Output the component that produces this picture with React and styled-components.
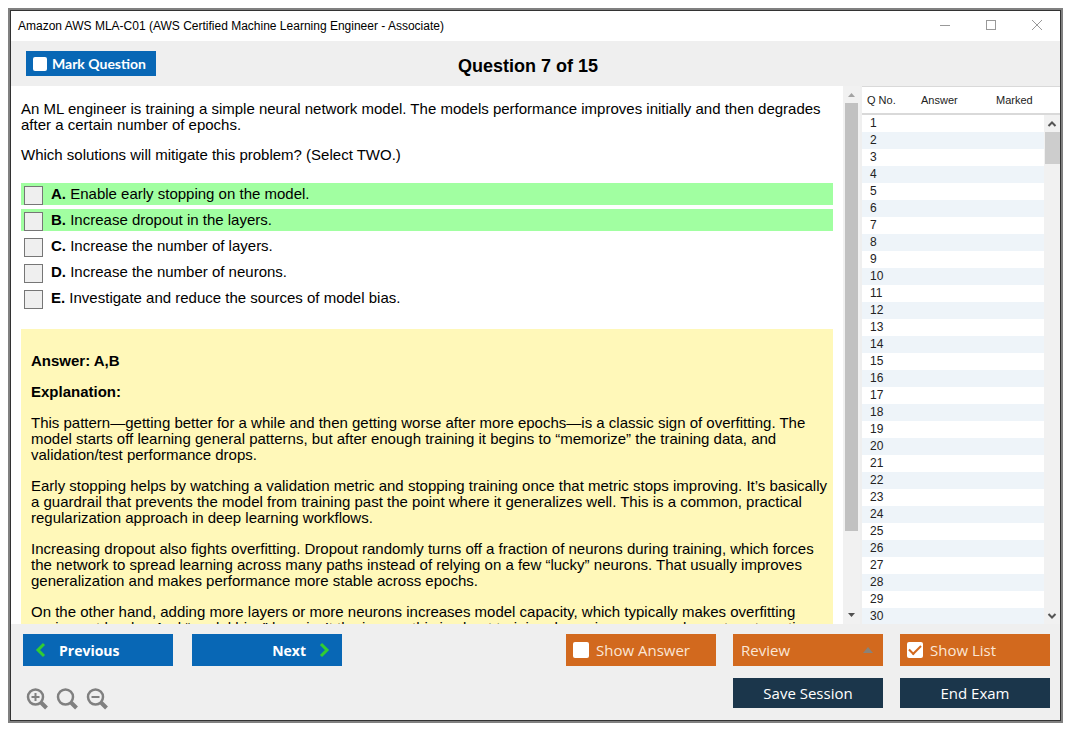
import React from "react";
import styled, { createGlobalStyle, css } from "styled-components";

const Global = createGlobalStyle`
  * { box-sizing: border-box; }
  body { margin: 0; background: #fff; color: #000; font-family: "Liberation Sans", Arial, sans-serif; }
  p, h1, h2 { margin: 0; }
  button, input, select { font: inherit; margin: 0; }
`;

const Page = styled.div`
  height: 100vh;
  min-height: 400px;
  padding: 8px 12px 12px 8px;
`;

const Window = styled.main`
  height: 100%;
  border: 2px solid #808080;
  outline: 1px solid #333;
  outline-offset: -3px;
  padding: 1px;
  display: flex;
  flex-direction: column;
  background: #efefef;
`;

const TitleBar = styled.header`
  display: flex;
  align-items: center;
  justify-content: space-between;
  height: 30px;
  flex: none;
  padding: 0 17px 0 7px;
  background: #fff;
  font-size: 12px;
`;

const WindowControls = styled.div`
  display: flex;
  gap: 34px;
  padding-bottom: 2px;
`;

const ControlButton = styled.button`
  width: 12px;
  height: 12px;
  padding: 0;
  border: 0;
  background: none;
  svg { display: block; }
`;

const Header = styled.div`
  display: grid;
  grid-template-columns: 1fr auto 1fr;
  align-items: center;
  height: 45px;
  flex: none;
  padding: 0 30px 0 15px;
`;

const Heading = styled.h1`
  font-size: 18px;
  line-height: 20px;
  padding-top: 4px;
`;

const MarkLabel = styled.label`
  justify-self: start;
  display: flex;
  align-items: center;
  gap: 5px;
  height: 25px;
  padding: 0 10px 0 7px;
  background: #0867b5;
  color: #fff;
  font: bold 14px Lato, sans-serif;
`;

const WhiteBox = styled.input.attrs({ type: "checkbox" })`
  appearance: none;
  flex: none;
  width: ${(p) => p.$size}px;
  height: ${(p) => p.$size}px;
  border-radius: 2px;
  background: #fff;
  display: grid;
  place-items: center;
  &:checked::after {
    content: "";
    width: 10px;
    height: 5px;
    border: solid #d2691e;
    border-width: 0 0 2px 2px;
    transform: rotate(-45deg);
    margin-bottom: 3px;
  }
`;

const Body = styled.div`
  display: flex;
  flex: 1;
  min-height: 0;
`;

const Content = styled.section`
  flex: 1;
  min-width: 0;
  overflow: hidden;
  padding: 15px 10px 0;
  background: #fff;
  font-size: 15px;
  line-height: 16px;
`;

const Stack = styled.div`
  display: flex;
  flex-direction: column;
  gap: ${(p) => p.$gap}px;
`;

const Options = styled.ul`
  list-style: none;
  margin: 20px 0;
  padding: 0;
  display: flex;
  flex-direction: column;
  gap: 4px;
`;

const Option = styled.li`
  height: 22px;
  background: ${(p) => (p.$correct ? "#a1ffa1" : "transparent")};
  label { display: flex; gap: 8px; padding: 3px; }
`;

const OptionBox = styled.input.attrs({ type: "checkbox" })`
  appearance: none;
  flex: none;
  width: 19px;
  height: 19px;
  border: 1px solid #767676;
  background: #efefef;
`;

const Explanation = styled(Stack)`
  padding: 24px 4px 24px 10px;
  background: #fff8b9;
  h2 { font-size: 15px; line-height: 16px; }
`;

const Scroll = styled.div`
  display: flex;
  flex-direction: column;
  align-items: center;
  width: 17px;
  flex: none;
  background: #f1f1f1;
  svg { display: block; flex: none; }
`;

const Track = styled.div`
  flex: 1;
  width: 13px;
`;

const Thumb = styled.div`
  height: ${(p) => p.$size};
  background: ${(p) => p.$color};
`;

const ListPane = styled.aside`
  position: relative;
  width: 198px;
  flex: none;
  margin-left: 2px;
  overflow: hidden;
  background: #fff;
  border-top: 1px solid #d9d9d9;
`;

const ListScroll = styled(Scroll)`
  position: absolute;
  top: 28px;
  right: 0;
  bottom: 0;
  width: 16px;
  ${Track} { width: 15px; }
`;

const Table = styled.table`
  width: 100%;
  border-collapse: separate;
  border-spacing: 0;
  table-layout: fixed;
  color: #222;
  th { height: 28px; padding: 0 5px; font-size: 11px; font-weight: normal; text-align: left; border-bottom: 2px solid #d9d9d9; }
  th:nth-child(1) { width: 54px; }
  th:nth-child(2) { width: 75px; }
  td { height: 17px; padding: 0 8px; font-size: 12px; line-height: 17px; }
  tbody tr:nth-child(even) { background: #eef4f9; }
`;

const Footer = styled.footer`
  display: flex;
  justify-content: space-between;
  flex: none;
  padding: 10px 10px 10px 12px;
  font-family: "Open Sans", sans-serif;
  font-size: 15px;
`;

const NavGroup = styled.div`
  display: flex;
  flex-direction: column;
  gap: 20px;
`;

const NavButtons = styled.div`
  display: flex;
  gap: 19px;
`;

const tile = css`
  display: flex;
  align-items: center;
  width: 150px;
  height: ${(p) => (p.$dark ? 30 : 32)}px;
  border: 0;
  color: #fff;
`;

const NavButton = styled.button`
  ${tile}
  gap: 12px;
  padding: 0 12px;
  justify-content: ${(p) => (p.$end ? "flex-end" : "flex-start")};
  background: #0867b5;
  font-size: 14px;
  font-weight: bold;
`;

const Tools = styled.div`
  display: flex;
  gap: 6px;
  padding-left: 3px;
`;

const ToolButton = styled.button`
  width: 24px;
  height: 24px;
  padding: 0;
  border: 0;
  background: none;
  svg { display: block; }
`;

const Actions = styled.div`
  display: grid;
  grid-template-columns: repeat(3, auto);
  gap: 12px 17px;
  align-content: start;
`;

const ToggleTile = styled.label`
  ${tile}
  gap: 7px;
  padding: 0 7px;
  background: #d2691e;
  color: #fbe6d6;
`;

const ReviewWrap = styled.div`
  position: relative;
  svg { position: absolute; right: 9px; top: 13px; pointer-events: none; }
`;

const ReviewSelect = styled.select`
  ${tile}
  appearance: none;
  padding: 0 8px;
  background: #d2691e;
  color: #fbe6d6;
`;

const DarkButton = styled.button`
  ${tile}
  justify-content: center;
  background: #1b364b;
  grid-column: ${(p) => p.$column};
`;

const Arrow = ({ up }) => (
  <svg width="17" height="17" aria-hidden="true">
    <path d={up ? "M5 11l3.5-4 3.5 4z" : "M5 6l3.5 4L12 6z"} fill={up ? "#a3a3a3" : "#505050"} />
  </svg>
);

const Chevron = ({ up }) => (
  <svg width="16" height="17" aria-hidden="true">
    <path d={up ? "M4.500 11L8 7.500l3.500 3.500" : "M4.500 7L8 10.500l3.500-3.500"} fill="none" stroke="#555" strokeWidth="2" />
  </svg>
);

const GreenChevron = ({ right }) => (
  <svg width="12" height="16" aria-hidden="true">
    <path d={right ? "M3 2l6 6-6 6" : "M9 2L3 8l6 6"} fill="none" stroke="#32cd32" strokeWidth="3" />
  </svg>
);

const Magnifier = ({ sign }) => (
  <svg width="24" height="24" fill="none" stroke="#808080" aria-hidden="true">
    <circle cx="9.500" cy="11" r="7.500" strokeWidth="2.500" />
    <path d="M15 16.500l5.500 5.500" strokeWidth="4" />
    {sign && <path d={sign === "+" ? "M5.500 11h8M9.500 7v8" : "M5.500 11h8"} strokeWidth="2" />}
  </svg>
);

const options = [
  ["A", "Enable early stopping on the model.", true],
  ["B", "Increase dropout in the layers.", true],
  ["C", "Increase the number of layers."],
  ["D", "Increase the number of neurons."],
  ["E", "Investigate and reduce the sources of model bias."],
];

const rows = Array.from({ length: 30 }, (_, i) => i + 1);

export default function App() {
  return (
    <Page>
      <Global />
      <Window>
        <TitleBar>
          <span>Amazon AWS MLA-C01 (AWS Certified Machine Learning Engineer - Associate)</span>
          <WindowControls>
            <ControlButton aria-label="Minimize">
              <svg width="12" height="12"><path d="M1 6.500h10" stroke="#999" /></svg>
            </ControlButton>
            <ControlButton aria-label="Maximize">
              <svg width="12" height="12"><rect x="1.500" y="1.500" width="9" height="9" fill="none" stroke="#999" /></svg>
            </ControlButton>
            <ControlButton aria-label="Close">
              <svg width="12" height="12"><path d="M1 1l10 10M11 1L1 11" stroke="#999" /></svg>
            </ControlButton>
          </WindowControls>
        </TitleBar>
        <Header>
          <MarkLabel><WhiteBox $size={14} />Mark Question</MarkLabel>
          <Heading>Question 7 of 15</Heading>
        </Header>
        <Body>
          <Content>
            <Stack $gap={14}>
              <p>An ML engineer is training a simple neural network model. The models performance improves initially and then degrades after a certain number of epochs.</p>
              <p>Which solutions will mitigate this problem? (Select TWO.)</p>
            </Stack>
            <Options>
              {options.map(([letter, text, correct]) => (
                <Option key={letter} $correct={correct}>
                  <label><OptionBox /><span><b>{letter}.</b> {text}</span></label>
                </Option>
              ))}
            </Options>
            <Explanation $gap={15}>
              <h2>Answer: A,B</h2>
              <h2>Explanation:</h2>
              <p>This pattern—getting better for a while and then getting worse after more epochs—is a classic sign of overfitting. The model starts off learning general patterns, but after enough training it begins to “memorize” the training data, and validation/test performance drops.</p>
              <p>Early stopping helps by watching a validation metric and stopping training once that metric stops improving. It’s basically a guardrail that prevents the model from training past the point where it generalizes well. This is a common, practical regularization approach in deep learning workflows.</p>
              <p>Increasing dropout also fights overfitting. Dropout randomly turns off a fraction of neurons during training, which forces the network to spread learning across many paths instead of relying on a few “lucky” neurons. That usually improves generalization and makes performance more stable across epochs.</p>
              <p>On the other hand, adding more layers or more neurons increases model capacity, which typically makes overfitting easier, not harder. And “model bias” here isn’t the issue—this is about training dynamics over epochs, not systematic</p>
            </Explanation>
          </Content>
          <Scroll>
            <Arrow up />
            <Track><Thumb $size="85%" $color="#c1c1c1" /></Track>
            <Arrow />
          </Scroll>
          <ListPane>
            <Table>
              <thead><tr><th>Q No.</th><th>Answer</th><th>Marked</th></tr></thead>
              <tbody>
                {rows.map((n) => <tr key={n}><td>{n}</td><td /><td /></tr>)}
              </tbody>
            </Table>
            <ListScroll>
              <Chevron up />
              <Track><Thumb $size="32px" $color="#cdcdcd" /></Track>
              <Chevron />
            </ListScroll>
          </ListPane>
        </Body>
        <Footer>
          <NavGroup>
            <NavButtons>
              <NavButton><GreenChevron />Previous</NavButton>
              <NavButton $end>Next<GreenChevron right /></NavButton>
            </NavButtons>
            <Tools>
              <ToolButton aria-label="Zoom in"><Magnifier sign="+" /></ToolButton>
              <ToolButton aria-label="Reset zoom"><Magnifier /></ToolButton>
              <ToolButton aria-label="Zoom out"><Magnifier sign="-" /></ToolButton>
            </Tools>
          </NavGroup>
          <Actions>
            <ToggleTile><WhiteBox $size={16} />Show Answer</ToggleTile>
            <ReviewWrap>
              <ReviewSelect aria-label="Review"><option>Review</option></ReviewSelect>
              <svg width="12" height="6" aria-hidden="true"><path d="M1 6l5-6 5 6z" fill="#8a8278" /></svg>
            </ReviewWrap>
            <ToggleTile><WhiteBox $size={16} defaultChecked />Show List</ToggleTile>
            <DarkButton $dark $column={2}>Save Session</DarkButton>
            <DarkButton $dark $column={3}>End Exam</DarkButton>
          </Actions>
        </Footer>
      </Window>
    </Page>
  );
}
